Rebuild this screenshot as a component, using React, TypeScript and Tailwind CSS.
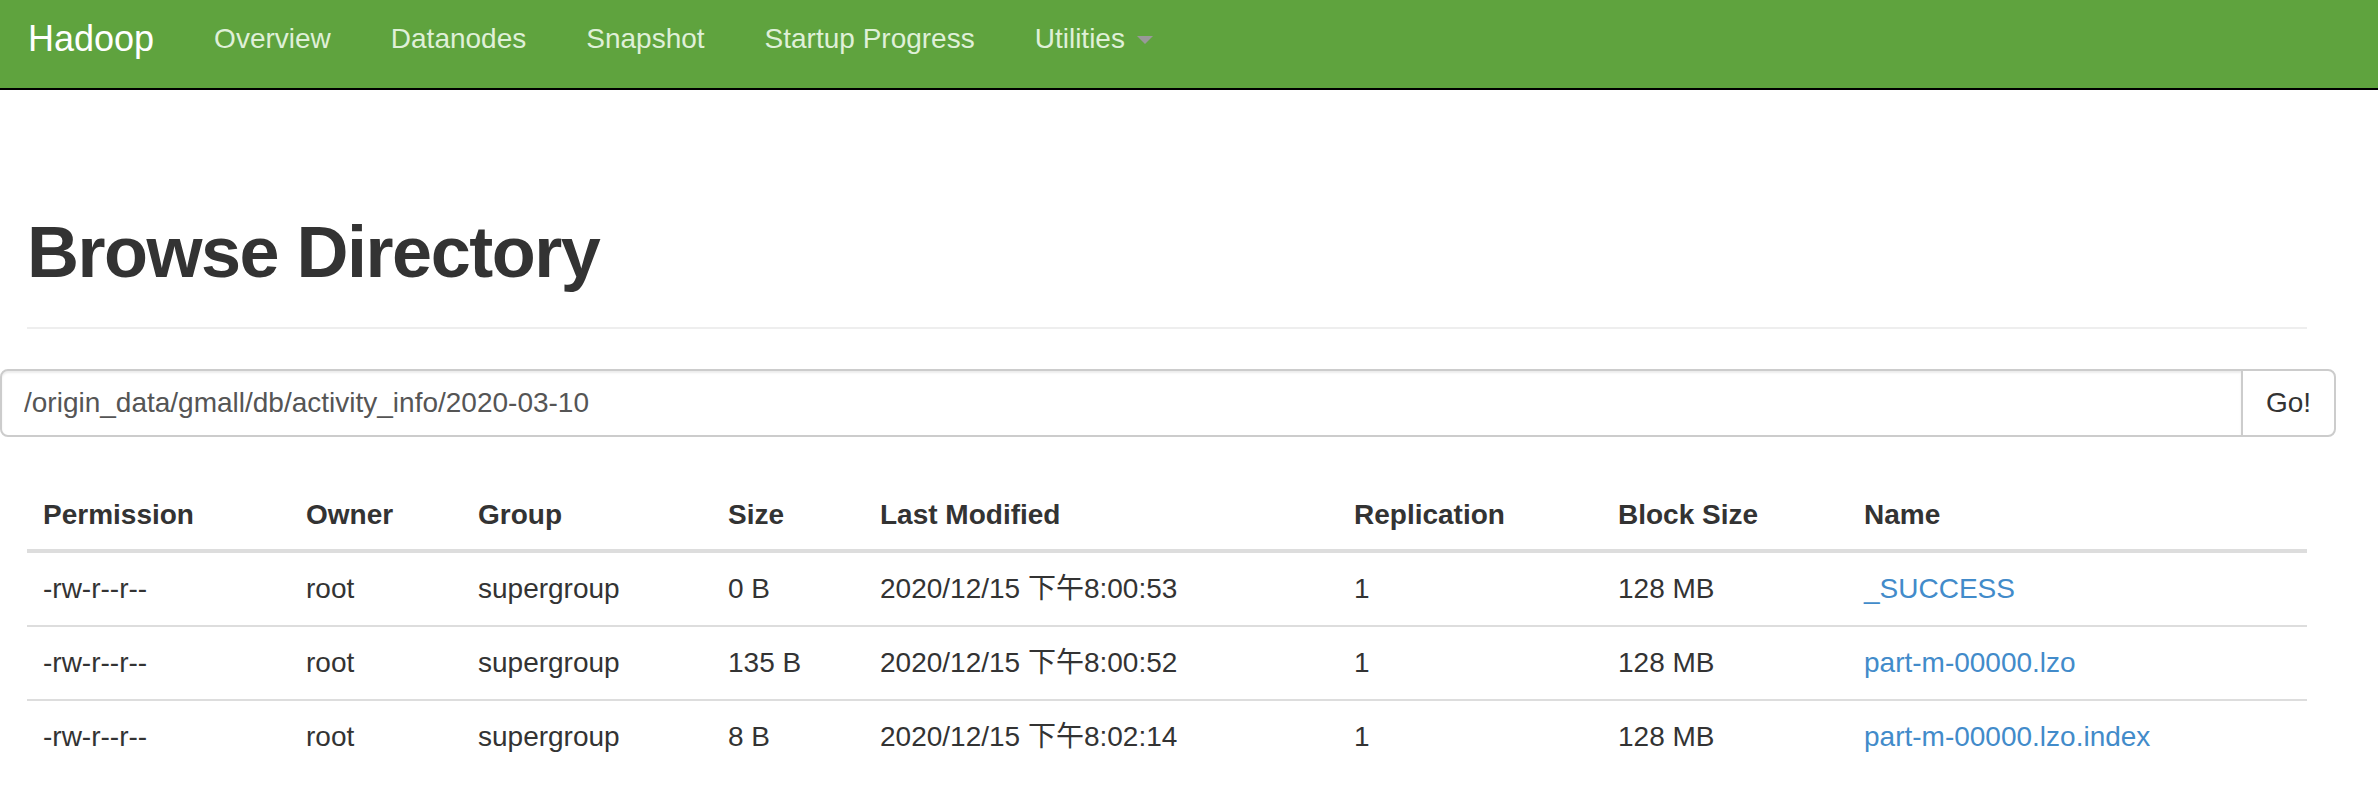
const navLinks = ["Overview", "Datanodes", "Snapshot", "Startup Progress"];

const files = [
  { perm: "-rw-r--r--", owner: "root", group: "supergroup", size: "0 B", modified: "2020/12/15 下午8:00:53", repl: "1", block: "128 MB", name: "_SUCCESS" },
  { perm: "-rw-r--r--", owner: "root", group: "supergroup", size: "135 B", modified: "2020/12/15 下午8:00:52", repl: "1", block: "128 MB", name: "part-m-00000.lzo" },
  { perm: "-rw-r--r--", owner: "root", group: "supergroup", size: "8 B", modified: "2020/12/15 下午8:02:14", repl: "1", block: "128 MB", name: "part-m-00000.lzo.index" },
];

const headers = ["Permission", "Owner", "Group", "Size", "Last Modified", "Replication", "Block Size", "Name"];
const colWidths = ["w-[263px]", "w-[172px]", "w-[250px]", "w-[152px]", "w-[474px]", "w-[264px]", "w-[246px]", "w-[459px]"];

const App = () => {
  return (
    <div className="min-h-screen bg-white font-['Liberation_Sans','Noto_Sans_CJK_SC',Arial,sans-serif] text-[#333]">
      {/* navbar */}
      <nav className="flex h-[90px] items-start border-b-2 border-black bg-[#5fa33e] pt-[19px]">
        <a className="pl-[28px] pr-[30px] text-[36px] leading-[40px] text-white">Hadoop</a>
        {navLinks.map((l) => (
          <a key={l} className="px-[30px] text-[28px] leading-[40px] text-[#dff0d8]">
            {l}
          </a>
        ))}
        <a className="flex items-center px-[30px] text-[28px] leading-[40px] text-[#dff0d8]">
          Utilities
          <span className="ml-[12px] mt-[2px] inline-block h-0 w-0 border-x-[8px] border-t-[8px] border-x-transparent border-t-[#999]" />
        </a>
      </nav>

      <div className="px-[27px]">
        <div className="mt-[123px] w-[2280px] border-b-2 border-[#eee] pb-[35px]">
          <h1 className="text-[72px] font-bold leading-[79px] tracking-[-1.5px]">Browse Directory</h1>
        </div>

        <form className="-ml-[27px] mt-[40px] flex h-[68px] w-[2336px]" onSubmit={(e) => e.preventDefault()}>
          <input
            type="text"
            defaultValue="/origin_data/gmall/db/activity_info/2020-03-10"
            className="h-[68px] w-[2243px] rounded-l-[8px] border-2 border-[#ccc] px-[22px] text-[28px] text-[#555] shadow-[inset_0_2px_2px_rgba(0,0,0,0.075)] outline-none"
          />
          <button
            type="submit"
            className="-ml-[2px] h-[68px] w-[95px] rounded-r-[8px] border-2 border-[#ccc] bg-white text-[28px] text-[#333]"
          >
            Go!
          </button>
        </form>

        <table className="mt-[42px] w-[2280px] table-fixed border-collapse text-left text-[28px] leading-[40px]">
          <colgroup>
            {colWidths.map((w, i) => (
              <col key={i} className={w} />
            ))}
          </colgroup>
          <thead>
            <tr className="border-b-4 border-[#ddd]">
              {headers.map((h) => (
                <th key={h} className="px-[16px] pb-[14px] pt-[16px] font-bold">
                  {h}
                </th>
              ))}
            </tr>
          </thead>
          <tbody>
            {files.map((f, i) => (
              <tr key={f.name} className={i > 0 ? "border-t-2 border-[#ddd]" : ""}>
                <td className="px-[16px] py-[16px]">{f.perm}</td>
                <td className="px-[16px] py-[16px]">{f.owner}</td>
                <td className="px-[16px] py-[16px]">{f.group}</td>
                <td className="px-[16px] py-[16px]">{f.size}</td>
                <td className="px-[16px] py-[16px]">{f.modified}</td>
                <td className="px-[16px] py-[16px]">{f.repl}</td>
                <td className="px-[16px] py-[16px]">{f.block}</td>
                <td className="px-[16px] py-[16px]">
                  <a className="text-[#428bca]">{f.name}</a>
                </td>
              </tr>
            ))}
          </tbody>
        </table>
      </div>
    </div>
  );
};

export default App;
